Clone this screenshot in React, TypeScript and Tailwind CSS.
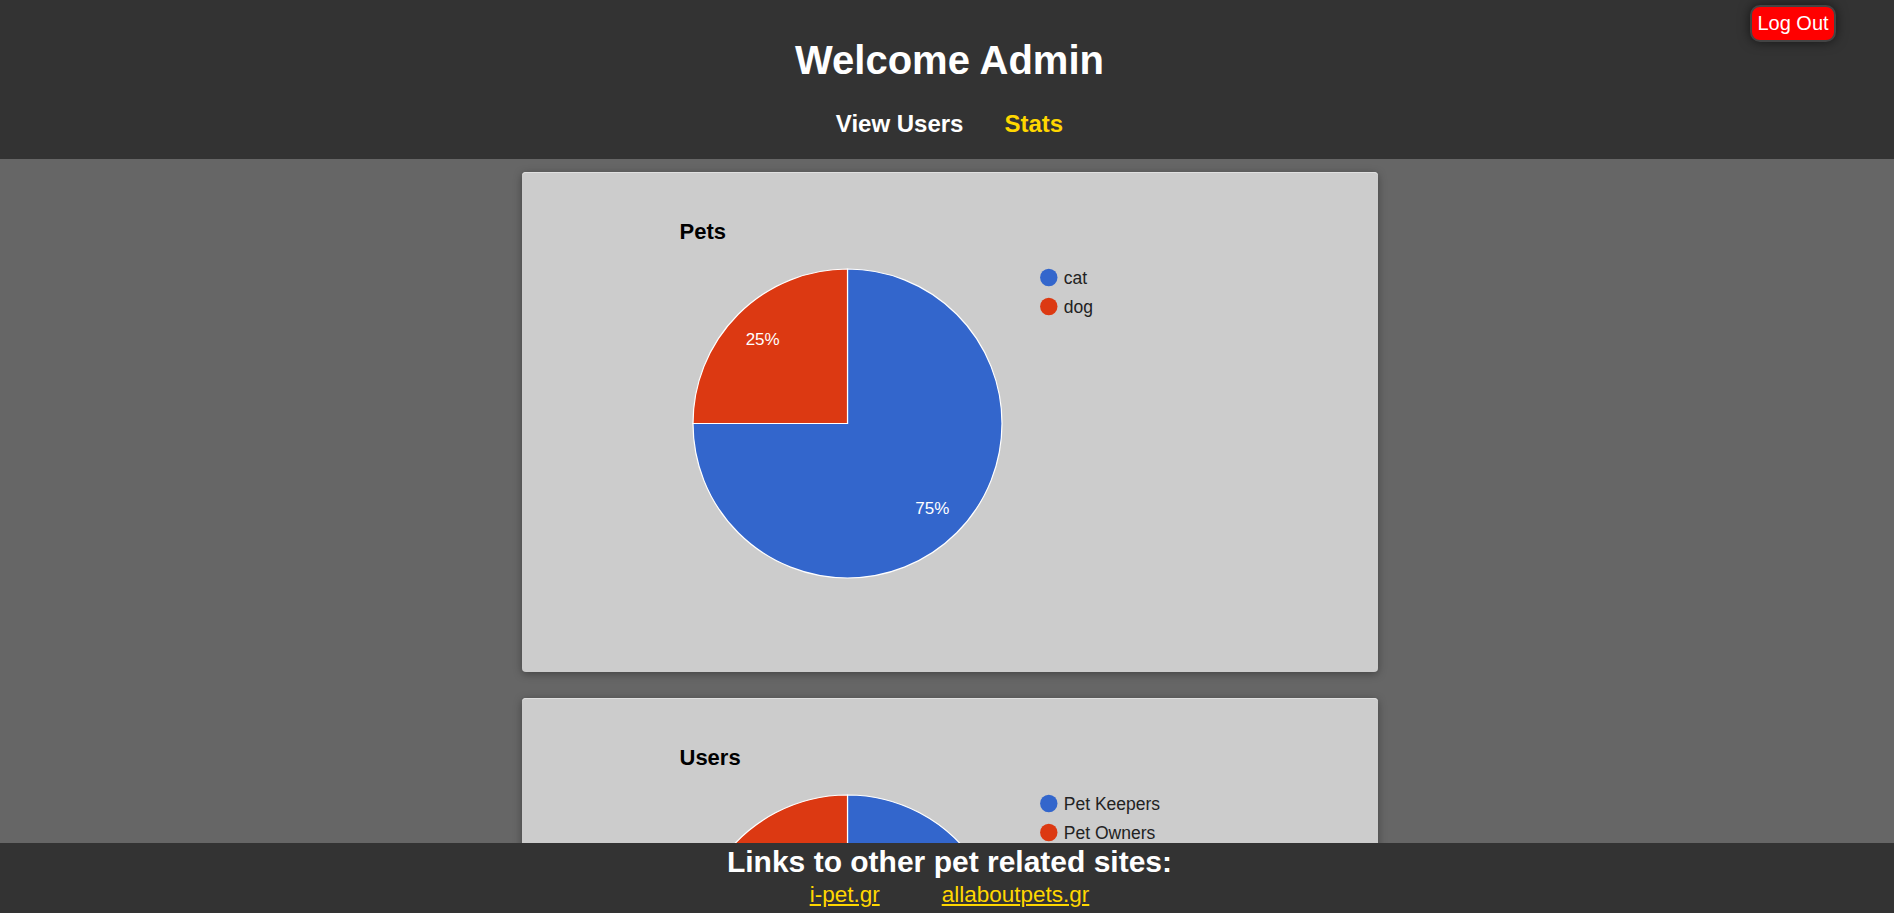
import React from "react";

type Slice = { label: string; value: number; color: string };

const CX = 325.5;
const CY = 251.5;
const R = 154.5;

function pt(angleDeg: number, r: number) {
  const a = ((angleDeg - 90) * Math.PI) / 180;
  return [CX + r * Math.cos(a), CY + r * Math.sin(a)];
}

function PieChart({ title, data }: { title: string; data: Slice[] }) {
  const total = data.reduce((s, d) => s + d.value, 0);
  let start = 0;
  const slices = data.map((d) => {
    const sweep = (d.value / total) * 360;
    const end = start + sweep;
    const [x1, y1] = pt(start, R);
    const [x2, y2] = pt(end, R);
    const large = sweep > 180 ? 1 : 0;
    const path = `M ${CX} ${CY} L ${x1} ${y1} A ${R} ${R} 0 ${large} 1 ${x2} ${y2} Z`;
    const [lx, ly] = pt(start + sweep / 2, 120);
    const pct = Math.round((d.value / total) * 100) + "%";
    start = end;
    return { path, lx, ly, pct, color: d.color };
  });
  return (
    <svg width="856" height="500" viewBox="0 0 856 500" className="block">
      <text
        x="157.5"
        y="66.5"
        fontFamily="'Liberation Sans', Arial, sans-serif"
        fontSize="22"
        fontWeight="bold"
        fill="#000"
      >
        {title}
      </text>
      {slices.map((s, i) => (
        <path key={i} d={s.path} fill={s.color} stroke="#fff" strokeWidth="1.2" />
      ))}
      {slices.map((s, i) => (
        <text
          key={"l" + i}
          x={s.lx}
          y={s.ly + 6}
          textAnchor="middle"
          fontFamily="'Liberation Sans', Arial, sans-serif"
          fontSize="17"
          fill="#fff"
        >
          {s.pct}
        </text>
      ))}
      {data.map((d, i) => (
        <g key={"g" + i}>
          <circle cx="526.8" cy={105.5 + i * 29} r="8.7" fill={d.color} />
          <text
            x="541.8"
            y={111.5 + i * 29}
            fontFamily="'Liberation Sans', Arial, sans-serif"
            fontSize="17.5"
            fill="#222"
          >
            {d.label}
          </text>
        </g>
      ))}
    </svg>
  );
}

export default function App() {
  return (
    <div className="min-h-screen bg-[#666666] pl-[5px] pb-[90px] font-['Liberation_Sans',Arial,sans-serif]">
      <header className="relative -ml-[5px] h-[159px] bg-[#333333] pl-[5px] pt-[37px] text-center">
        <h1 className="text-[40px] font-bold leading-[46px] text-white">Welcome Admin</h1>
        <nav className="mt-[27px] flex justify-center gap-[41px] text-[24px] font-bold leading-[28px]">
          <a className="text-white" href="#">View Users</a>
          <a className="text-[#ffd700]" href="#">Stats</a>
        </nav>
        <button className="absolute right-[58px] top-[5px] flex h-[37px] w-[86px] items-center justify-center rounded-[10px] border-2 border-[#444] bg-[#ff0000] text-[20px] leading-[23px] text-white shadow-[0_0_12px_rgba(0,0,0,0.6)]">
          Log Out
        </button>
      </header>
      <main className="mx-auto flex w-[856px] flex-col gap-[26px] pt-[12.5px]">
        <div className="h-[500px] overflow-hidden rounded-[4px] bg-[#cccccc] shadow-[inset_0_1px_0_#e0e0e0,0_2px_8px_rgba(0,0,0,0.35)]">
          <PieChart
            title="Pets"
            data={[
              { label: "cat", value: 3, color: "#3366cc" },
              { label: "dog", value: 1, color: "#dc3912" },
            ]}
          />
        </div>
        <div className="h-[500px] overflow-hidden rounded-[4px] bg-[#cccccc] shadow-[inset_0_1px_0_#e0e0e0,0_2px_8px_rgba(0,0,0,0.35)]">
          <PieChart
            title="Users"
            data={[
              { label: "Pet Keepers", value: 2, color: "#3366cc" },
              { label: "Pet Owners", value: 1, color: "#dc3912" },
            ]}
          />
        </div>
      </main>
      <footer className="fixed bottom-0 left-0 h-[70px] w-full bg-[#333333] pl-[5px] pt-[2px] text-center">
        <h2 className="text-[30px] font-bold leading-[34px] text-white">Links to other pet related sites:</h2>
        <div className="mt-[3px] flex justify-center gap-[62px] text-[22.5px] leading-[26px]">
          <a className="text-[#ffd700] underline" href="#">i-pet.gr</a>
          <a className="text-[#ffd700] underline" href="#">allaboutpets.gr</a>
        </div>
      </footer>
    </div>
  );
}
